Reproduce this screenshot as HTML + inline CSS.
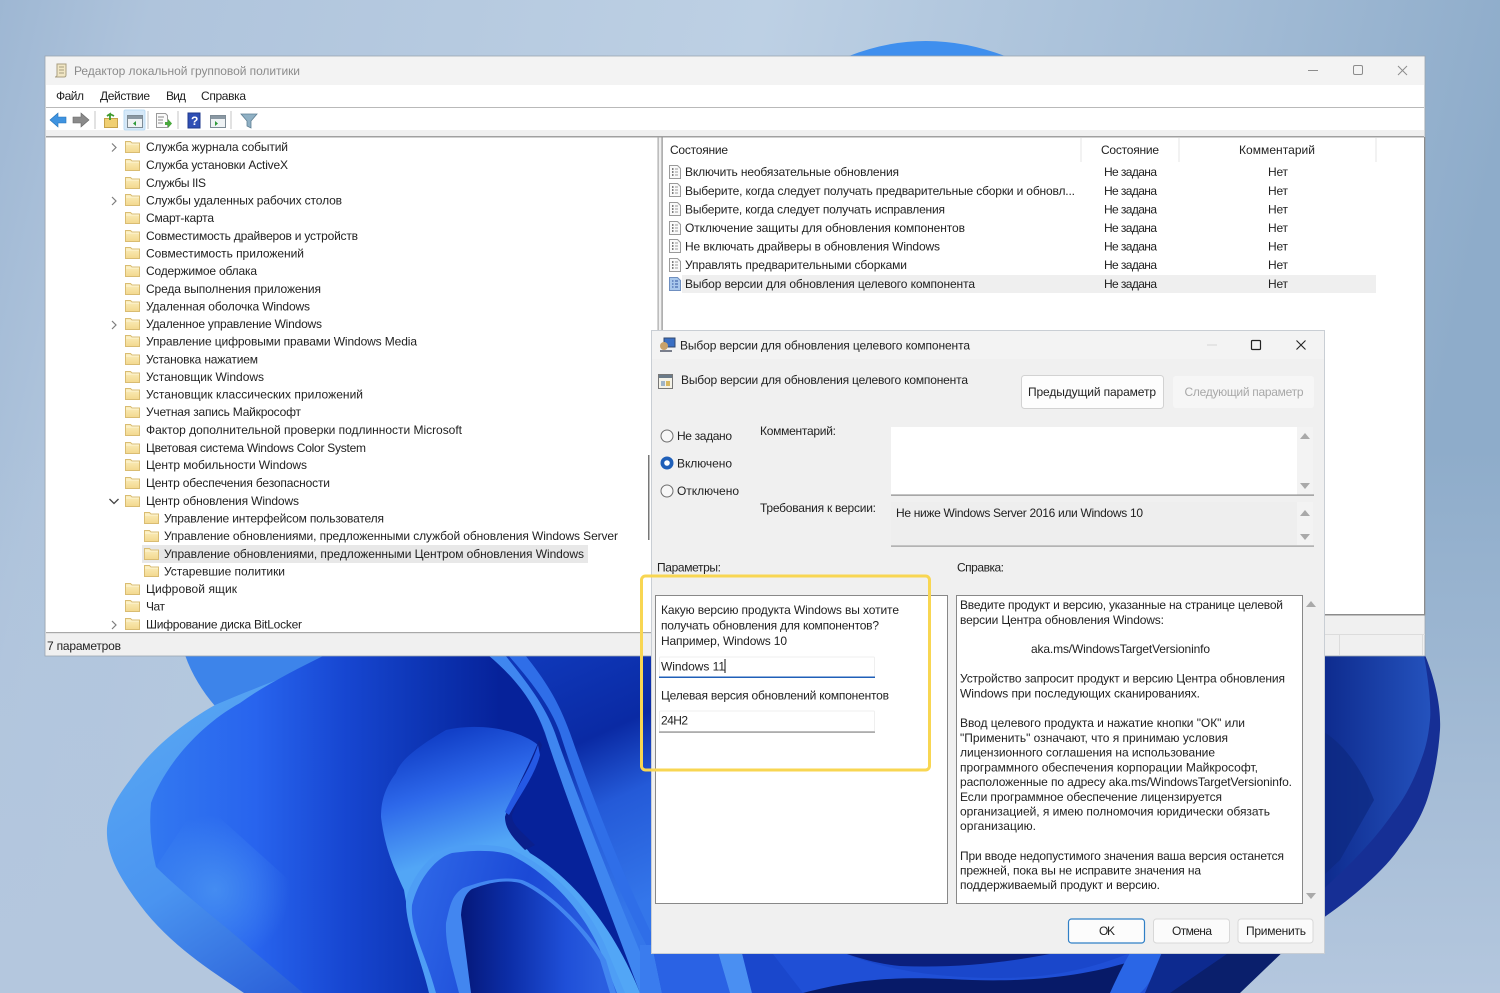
<!DOCTYPE html>
<html lang="ru"><head><meta charset="utf-8"><title>Редактор локальной групповой политики</title>
<style>
html,body{margin:0;padding:0;background:#b5c8df;overflow:hidden}
svg{display:block;position:absolute;left:0;top:0}
text{font-family:"Liberation Sans",sans-serif;font-size:12px;fill:#222;white-space:pre}
.g{fill:#8b8b8b}.d{fill:#a8a8a8}
</style></head><body>
<svg width="1500" height="993" viewBox="0 0 1500 993" xmlns="http://www.w3.org/2000/svg">
<defs>
<linearGradient id="bg" x1="0" y1="0" x2="1" y2="0.15"><stop offset="0" stop-color="#9eb7d3"/><stop offset=".1" stop-color="#afc4dc"/><stop offset=".5" stop-color="#bdd0e4"/><stop offset=".8" stop-color="#a3bcd6"/><stop offset="1" stop-color="#8eacca"/></linearGradient>
<linearGradient id="bg2" x1="0" y1="0" x2="0" y2="1"><stop offset=".45" stop-color="#b4c7de" stop-opacity="0"/><stop offset="1" stop-color="#b4c7de"/></linearGradient>
<linearGradient id="rim" x1="107" y1="700" x2="300" y2="993" gradientUnits="userSpaceOnUse"><stop offset="0" stop-color="#5aa9f4"/><stop offset=".55" stop-color="#4a94f0"/><stop offset="1" stop-color="#2a5fd8"/></linearGradient>
<linearGradient id="main" x1="150" y1="800" x2="500" y2="800" gradientUnits="userSpaceOnUse"><stop offset="0" stop-color="#3278f0"/><stop offset=".3" stop-color="#2864ee"/><stop offset=".55" stop-color="#1747d2"/><stop offset=".8" stop-color="#0c33b2"/><stop offset="1" stop-color="#06229a"/></linearGradient>
<radialGradient id="lo" cx="215" cy="890" r="75" gradientUnits="userSpaceOnUse"><stop offset="0" stop-color="#4a94f2" stop-opacity=".8"/><stop offset="1" stop-color="#4a94f2" stop-opacity="0"/></radialGradient>
<linearGradient id="fold" x1="440" y1="735" x2="475" y2="850" gradientUnits="userSpaceOnUse"><stop offset="0" stop-color="#1240c8"/><stop offset=".45" stop-color="#2d68ea"/><stop offset="1" stop-color="#52a6f6"/></linearGradient>
<linearGradient id="in1" x1="420" y1="900" x2="610" y2="950" gradientUnits="userSpaceOnUse"><stop offset="0" stop-color="#2c64e6"/><stop offset=".5" stop-color="#1b49d6"/><stop offset="1" stop-color="#2d62e2"/></linearGradient>
<linearGradient id="in2" x1="462" y1="940" x2="600" y2="940" gradientUnits="userSpaceOnUse"><stop offset="0" stop-color="#05187a"/><stop offset=".35" stop-color="#0c2ea8"/><stop offset=".75" stop-color="#1f4fd8"/><stop offset="1" stop-color="#2a5ee0"/></linearGradient>
<linearGradient id="rgt" x1="540" y1="660" x2="650" y2="900" gradientUnits="userSpaceOnUse"><stop offset="0" stop-color="#0f37b8"/><stop offset=".35" stop-color="#0a2aa4"/><stop offset=".6" stop-color="#245ad8"/><stop offset="1" stop-color="#3476ea"/></linearGradient>
<linearGradient id="rt" x1="1324" y1="750" x2="1430" y2="750" gradientUnits="userSpaceOnUse"><stop offset="0" stop-color="#0e2b8e"/><stop offset="1" stop-color="#2452bd"/></linearGradient>
<linearGradient id="fd" x1="0" y1="0" x2="0" y2="1"><stop offset="0" stop-color="#fbeebd"/><stop offset="1" stop-color="#f3d88e"/></linearGradient>
<g id="f"><path d="M.5 2.500h5l1.500 1.500h7.500v9.500h-14z" fill="url(#fd)" stroke="#d9bc72"/><path d="M1 5h13" stroke="#fdf6d8"/></g>
<g id="p"><path d="M.5.500h8l3 3v10h-11z" fill="#fafafa" stroke="#9a9a9a"/><path d="M3 4h1.500M3 7h1.500M3 10h1.500" stroke="#333" stroke-width="1.200"/><path d="M6 4h3M6 7h3M6 10h3" stroke="#999"/></g>
<path id="r" d="M0-4l4 4-4 4" fill="none" stroke="#7d7d7d" stroke-width="1.200"/>
<path id="up" d="M-5 3h10l-5-6z" fill="#a9a9a9"/>
<path id="dn" d="M-5-3h10l-5 6z" fill="#a9a9a9"/>
</defs>

<rect width="1500" height="993" fill="url(#bg)"/>
<rect width="1500" height="993" fill="url(#bg2)"/>

<!-- wallpaper -->
<path d="M849 56Q925 26 1005 56z" fill="#3f8fee"/>
<path d="M185 655C192 675 203 692 215 706L345 655z" fill="#3d84ea"/>
<!-- whole silhouette base -->
<path d="M341 655C290 675 250 690 215 705C180 725 150 750 130 780C115 800 106 815 107 835C108 860 125 885 140 905C170 945 210 970 244 993H660V655z" fill="url(#rim)"/>
<!-- main interior -->
<path d="M325 655C295 670 265 685 240 703C200 725 165 765 151 803Q148 835 156 867C190 900 225 925 252 950L303 993H660V655z" fill="url(#main)"/>
<path d="M156 867C190 900 225 925 252 950L290 985L300 890L200 800z" fill="url(#lo)"/>
<!-- right-hand panels -->
<path d="M488 655C520 680 535 705 545 735C565 790 610 890 657 993H680V655z" fill="url(#rgt)"/>
<path d="M488 655C518 680 535 705 545 733C560 780 590 860 640 993H657C610 880 575 790 555 733C545 705 525 680 505 655z" fill="#3f86f0"/>
<path d="M508 655C530 680 550 705 560 733C575 780 610 880 657 965V945C620 870 590 790 570 733C558 700 545 680 525 655z" fill="#2f6ee8"/>
<!-- fold -->
<path d="M446 730C420 745 400 760 396 773C383 790 381 805 381 817C385 850 395 870 404 890C410 930 425 965 433 993H640C615 930 575 880 530 853C520 840 508 830 505 817C512 795 530 770 538 745C520 730 480 722 446 730z" fill="url(#fold)"/>
<path d="M539 740C530 765 512 795 505 817C505 830 515 840 525 850L535 845C520 830 512 825 512 815C520 795 535 770 542 745z" fill="#0a1f8c"/>
<path d="M538 745C530 770 512 795 505 812L509 815C520 795 535 775 540 755z" fill="#2458e4"/>
<!-- first inner -->
<path d="M406 900C410 880 430 852 450 847C480 843 500 845 513 850C550 868 585 900 605 945L625 993H429C420 955 405 925 406 900z" fill="#4e9ef5"/>
<path d="M412 905C418 880 435 858 452 853C480 849 500 851 511 855C545 872 580 905 600 950L617 993H436C426 955 410 930 412 905z" fill="url(#in1)"/>
<!-- second inner -->
<path d="M446 923C450 905 452 895 463 888C490 878 508 877 522 880C545 888 585 925 606 960L616 993H459C452 965 445 945 446 923z" fill="#4286f0"/>
<path d="M471 993L461 915C462 900 466 893 472 889C492 881 508 880 520 883C543 892 580 925 600 960L610 993z" fill="url(#in2)"/>
<!-- bottom strip -->
<rect x="640" y="945" width="600" height="48" fill="#1f4fd6"/>
<path d="M640 945H652L662 993H640z" fill="#3a7cee"/><path d="M652 945H716L730 993H662z" fill="#2a62e4"/><path d="M716 945H740L752 993H730z" fill="#4a8ff2"/><path d="M740 945H766L803 993H752z" fill="#1a47cc"/>
<path d="M844 953C880 968 930 978 1000 978C1060 978 1100 965 1130 953z" fill="#1a47cb"/>
<path d="M844 953C865 960 880 964 900 966C950 968 1000 964 1055 953z" fill="#0b1f7c"/>
<path d="M803 993C860 978 900 977 950 979C1030 984 1090 975 1135 960L1110 993z" fill="#071a68"/>
<path d="M1135 945H1165C1160 965 1150 985 1140 993H1110C1118 975 1128 955 1135 945z" fill="#2a66e6"/>
<path d="M1165 945H1240L1180 993H1145z" fill="#0d2a8f"/>
<path d="M1240 945H1290L1240 993H1170z" fill="#0a1f6c"/>
<!-- right side -->
<path d="M1320 655H1425C1437 685 1441 710 1440 730C1438 760 1432 785 1427 800C1420 820 1410 835 1400 847C1385 870 1350 900 1320 920z" fill="#162f95"/>
<path d="M1320 655H1424C1430 690 1431 710 1430 720C1428 740 1425 750 1420 763C1412 785 1403 800 1393 813C1375 840 1345 870 1320 892z" fill="url(#rt)"/>
<path d="M1324 732C1345 745 1362 770 1374 800L1340 860L1324 875z" fill="#0e2a82" opacity=".75"/>

<!-- main window -->
<rect x="45" y="56" width="1380" height="600" fill="#f0f0f0" stroke="#9aa5b0" stroke-width=".8"/>
<rect x="45.500" y="56.500" width="1379" height="29" fill="#f3f3f3"/>
<rect x="46" y="85" width="1378" height="22" fill="#fff"/>
<rect x="46" y="107" width="1378" height="1" fill="#b9b9b9"/>
<rect x="46" y="108" width="1378" height="22" fill="#fff"/>
<rect x="46" y="130" width="1378" height="6" fill="#f0f0f0"/>
<rect x="46" y="136" width="1378" height="1.500" fill="#a0a0a0"/>
<rect x="46" y="137.500" width="612" height="495" fill="#fff"/>
<rect x="657.500" y="137" width="1.200" height="496" fill="#a8a8a8"/>
<rect x="46" y="632" width="612" height="1.200" fill="#a8a8a8"/>
<rect x="662" y="137.500" width="762" height="477" fill="#fff"/>
<rect x="661.500" y="137" width="1.200" height="478" fill="#8f8f8f"/>
<rect x="662" y="614" width="763" height="1.500" fill="#8c8c8c"/>
<rect x="1424" y="137" width="1.200" height="478" fill="#8c8c8c"/>
<rect x="660" y="634" width="765" height="1" fill="#dcdcdc"/>
<rect x="1339" y="635" width="1" height="20" fill="#dcdcdc"/>
<rect x="1422" y="635" width="1" height="20" fill="#dcdcdc"/>
<rect x="648" y="455" width="1.500" height="85" fill="#777"/>

<!-- title -->
<g transform="translate(54 63)"><path d="M3 1h9v11q0 2-2 2H1q2 0 2-2z" fill="#f1e6c4" stroke="#a89e80"/><path d="M5 4h5M5 7h5M5 10h5" stroke="#a89e80"/></g>
<text class="g" x="74" y="75" textLength="226">Редактор локальной групповой политики</text>
<path d="M1308 70.500h10" stroke="#8c8c8c"/><rect x="1353.500" y="65.500" width="9" height="9" rx="1.500" fill="none" stroke="#8c8c8c"/><path d="M1398 66l9 9M1407 66l-9 9" stroke="#8c8c8c"/>
<text x="56" y="100" textLength="28">Файл</text><text x="100" y="100" textLength="50">Действие</text><text x="166" y="100" textLength="20">Вид</text><text x="201" y="100" textLength="45">Справка</text>

<!-- toolbar -->
<rect x="124" y="110" width="21" height="20" rx="1.500" fill="#d5e8f8" stroke="#bcdcf4"/>
<path d="M50 120l8-7v4h8v6h-8v4z" fill="#3f93e0" stroke="#2272b8" stroke-width=".6"/>
<path d="M89 120l-8-7v4h-8v6h8v4z" fill="#8a8a8a" stroke="#666" stroke-width=".6"/>
<path d="M95 111v18M148 111v18M178 111v18M231 111v18" stroke="#c4c4c4" stroke-width="1"/>
<path d="M104.500 118.500h13v9h-13z" fill="#f0cf72" stroke="#c6a24a"/><path d="M110 120l0-6-3 2M110 114l4 2" stroke="#3e9a2c" stroke-width="1.800" fill="none"/>
<rect x="127.500" y="115.500" width="15" height="12" fill="#eef2f4" stroke="#7d8b95"/><rect x="128" y="116" width="14" height="3" fill="#8a98a3"/><path d="M136 121v5l-3-2.500z" fill="#2f9a3a"/>
<path d="M156.500 113.500h9l2 2v12h-11z" fill="#fafafa" stroke="#9a9a9a"/><path d="M158 117h6M158 120h5M158 123h5" stroke="#888"/><path d="M165 122h3v-3l4 4.500-4 4.500v-3h-3z" fill="#49a83c"/>
<rect x="188" y="113" width="12" height="15" fill="#2f4fb5" stroke="#1f3a8c"/><text x="191" y="125" style="font-size:12px;font-weight:bold;fill:#fff">?</text>
<rect x="210.500" y="115.500" width="15" height="12" fill="#eef2f4" stroke="#7d8b95"/><rect x="211" y="116" width="14" height="3" fill="#8a98a3"/><path d="M215 121v5l3-2.500z" fill="#2f9a3a"/>
<path d="M241 114h16l-6 7v7l-4-2v-5z" fill="#8fb0c4" stroke="#5f7f93" stroke-width=".8"/>

<!-- tree -->
<rect x="142" y="545" width="446" height="18" fill="#e8e8e8"/>
<use href="#r" x="112" y="147.500"/><use href="#r" x="112" y="201"/><use href="#r" x="112" y="325"/><use href="#r" x="112" y="625"/>
<path d="M109.500 499l4.500 4.500 4.500-4.500" fill="none" stroke="#444" stroke-width="1.300"/>
<use href="#f" x="125" y="139"/><use href="#f" x="125" y="157"/><use href="#f" x="125" y="175"/><use href="#f" x="125" y="192"/><use href="#f" x="125" y="210"/><use href="#f" x="125" y="228"/><use href="#f" x="125" y="245"/><use href="#f" x="125" y="263"/><use href="#f" x="125" y="281"/><use href="#f" x="125" y="298"/><use href="#f" x="125" y="316"/><use href="#f" x="125" y="333"/><use href="#f" x="125" y="351"/><use href="#f" x="125" y="369"/><use href="#f" x="125" y="386"/><use href="#f" x="125" y="404"/><use href="#f" x="125" y="422"/><use href="#f" x="125" y="440"/><use href="#f" x="125" y="457"/><use href="#f" x="125" y="475"/><use href="#f" x="125" y="493"/><use href="#f" x="144" y="510"/><use href="#f" x="144" y="528"/><use href="#f" x="144" y="546"/><use href="#f" x="144" y="563"/><use href="#f" x="125" y="581"/><use href="#f" x="125" y="598"/><use href="#f" x="125" y="616"/>
<text x="146" y="151" textLength="142">Служба журнала событий</text>
<text x="146" y="169" textLength="142">Служба установки ActiveX</text>
<text x="146" y="187" textLength="60">Службы IIS</text>
<text x="146" y="204.500" textLength="196">Службы удаленных рабочих столов</text>
<text x="146" y="222" textLength="68">Смарт-карта</text>
<text x="146" y="240" textLength="212">Совместимость драйверов и устройств</text>
<text x="146" y="257.500" textLength="158">Совместимость приложений</text>
<text x="146" y="275" textLength="111">Содержимое облака</text>
<text x="146" y="293" textLength="175">Среда выполнения приложения</text>
<text x="146" y="310.500" textLength="164">Удаленная оболочка Windows</text>
<text x="146" y="328" textLength="176">Удаленное управление Windows</text>
<text x="146" y="345.500" textLength="271">Управление цифровыми правами Windows Media</text>
<text x="146" y="363.500" textLength="112">Установка нажатием</text>
<text x="146" y="381" textLength="118">Установщик Windows</text>
<text x="146" y="398.500" textLength="217">Установщик классических приложений</text>
<text x="146" y="416" textLength="155">Учетная запись Майкрософт</text>
<text x="146" y="434" textLength="316">Фактор дополнительной проверки подлинности Microsoft</text>
<text x="146" y="452" textLength="220">Цветовая система Windows Color System</text>
<text x="146" y="469" textLength="161">Центр мобильности Windows</text>
<text x="146" y="487" textLength="184">Центр обеспечения безопасности</text>
<text x="146" y="505" textLength="153">Центр обновления Windows</text>
<text x="164" y="522.500" textLength="220">Управление интерфейсом пользователя</text>
<text x="164" y="540" textLength="454">Управление обновлениями, предложенными службой обновления Windows Server</text>
<text x="164" y="558" textLength="420">Управление обновлениями, предложенными Центром обновления Windows</text>
<text x="164" y="575.500" textLength="121">Устаревшие политики</text>
<text x="146" y="593" textLength="91">Цифровой ящик</text>
<text x="146" y="610.500" textLength="19">Чат</text>
<text x="146" y="628.500" textLength="156">Шифрование диска BitLocker</text>
<text x="47" y="650" textLength="74">7 параметров</text>

<!-- list -->
<path d="M1081 138v24M1179 138v24M1376 138v24" stroke="#e4e4e4"/>
<text x="670" y="154" textLength="58">Состояние</text><text x="1101" y="154" textLength="58">Состояние</text><text x="1239" y="154" textLength="76">Комментарий</text>
<rect x="682" y="275" width="694" height="18" fill="#efefef"/>
<use href="#p" x="669" y="165"/><use href="#p" x="669" y="183"/><use href="#p" x="669" y="202"/><use href="#p" x="669" y="221"/><use href="#p" x="669" y="239"/><use href="#p" x="669" y="258"/>
<g transform="translate(669 277)"><path d="M.5.500h8l3 3v10h-11z" fill="#a9c8ec" stroke="#6f8fc0"/><path d="M3 4h1.500M3 7h1.500M3 10h1.500M6 4h3M6 7h3M6 10h3" stroke="#2f55a0"/></g>
<text x="685" y="176" textLength="214">Включить необязательные обновления</text>
<text x="685" y="195" textLength="390">Выберите, когда следует получать предварительные сборки и обновл...</text>
<text x="685" y="213.500" textLength="260">Выберите, когда следует получать исправления</text>
<text x="685" y="232" textLength="280">Отключение защиты для обновления компонентов</text>
<text x="685" y="250.500" textLength="255">Не включать драйверы в обновления Windows</text>
<text x="685" y="269" textLength="222">Управлять предварительными сборками</text>
<text x="685" y="288" textLength="290">Выбор версии для обновления целевого компонента</text>
<text x="1104" y="176" textLength="53">Не задана</text><text x="1104" y="195" textLength="53">Не задана</text><text x="1104" y="213.500" textLength="53">Не задана</text><text x="1104" y="232" textLength="53">Не задана</text><text x="1104" y="250.500" textLength="53">Не задана</text><text x="1104" y="269" textLength="53">Не задана</text><text x="1104" y="288" textLength="53">Не задана</text>
<text x="1268" y="176" textLength="20">Нет</text><text x="1268" y="195" textLength="20">Нет</text><text x="1268" y="213.500" textLength="20">Нет</text><text x="1268" y="232" textLength="20">Нет</text><text x="1268" y="250.500" textLength="20">Нет</text><text x="1268" y="269" textLength="20">Нет</text><text x="1268" y="288" textLength="20">Нет</text>

<!-- dialog -->
<rect x="651.500" y="330.500" width="673" height="623" fill="#f0f0f0" stroke="#c9ced4"/>
<rect x="652" y="331" width="672" height="28" fill="#f3f3f3"/>
<g transform="translate(660 338)"><rect x="4" y="0" width="11" height="9" fill="#3a6fc4" stroke="#33486e"/><circle cx="4" cy="8" r="4" fill="#c9a26a"/><path d="M0 12h12v2H0z" fill="#7a7f8c"/></g>
<text x="680" y="349.500" textLength="290">Выбор версии для обновления целевого компонента</text>
<path d="M1207 345h10" stroke="#d4d4d4"/><rect x="1251.500" y="340.500" width="9" height="9" rx="1" fill="none" stroke="#222" stroke-width="1.200"/><path d="M1296.500 340.500l9 9M1305.500 340.500l-9 9" stroke="#222" stroke-width="1.100"/>
<g transform="translate(658 374)"><rect x=".5" y=".5" width="14" height="14" fill="#f4f2e8" stroke="#777"/><rect x="1" y="1" width="13" height="3" fill="#6a7a88"/><rect x="3" y="7" width="4" height="5" fill="#9fb4c8"/><rect x="8" y="7" width="4" height="5" fill="#d8b860"/></g>
<text x="681" y="384" textLength="287">Выбор версии для обновления целевого компонента</text>
<rect x="1021.500" y="375.500" width="142" height="33" rx="3" fill="#fdfdfd" stroke="#d2d2d2"/>
<text x="1028" y="396" textLength="128">Предыдущий параметр</text>
<rect x="1173" y="376" width="141" height="32" rx="3" fill="#f6f6f6"/>
<text class="d" x="1184.500" y="396" textLength="119">Следующий параметр</text>

<circle cx="667" cy="436" r="6" fill="#f7f7f7" stroke="#6e6e6e"/>
<circle cx="667" cy="463" r="6.500" fill="#1f5fb8"/><circle cx="667" cy="463" r="2.800" fill="#fff"/>
<circle cx="667" cy="491" r="6" fill="#f7f7f7" stroke="#6e6e6e"/>
<text x="677" y="440" textLength="55">Не задано</text><text x="677" y="467.500" textLength="55">Включено</text><text x="677" y="495" textLength="62">Отключено</text>
<text x="760" y="435" textLength="76">Комментарий:</text><text x="760" y="512" textLength="116">Требования к версии:</text>

<rect x="891" y="427" width="406" height="68" fill="#fff"/><rect x="1297" y="427" width="16" height="68" fill="#f3f3f3"/>
<rect x="891" y="494.500" width="423" height="1.200" fill="#888"/>
<use href="#up" x="1305" y="436"/><use href="#dn" x="1305" y="486"/>
<rect x="891" y="502" width="406" height="43" fill="#eeeeee"/><rect x="1297" y="502" width="16" height="43" fill="#f3f3f3"/>
<rect x="891" y="545.500" width="423" height="1.200" fill="#999"/>
<use href="#up" x="1305" y="513"/><use href="#dn" x="1305" y="537"/>
<text x="896" y="517" textLength="247">Не ниже Windows Server 2016 или Windows 10</text>
<text x="657" y="571.500" textLength="64">Параметры:</text><text x="957" y="571.500" textLength="47">Справка:</text>

<rect x="655.500" y="595.500" width="292" height="308" fill="#fff" stroke="#888"/>
<rect x="956.500" y="595.500" width="346" height="308" fill="#fff" stroke="#888"/>
<use href="#up" x="1311" y="604"/><use href="#dn" x="1311" y="896"/>
<text x="661" y="614" textLength="238">Какую версию продукта Windows вы хотите</text>
<text x="661" y="629.500" textLength="218">получать обновления для компонентов?</text>
<text x="661" y="645" textLength="126">Например, Windows 10</text>
<rect x="659.500" y="657" width="215" height="20" rx="1" fill="#fff" stroke="#efefef"/><rect x="659" y="676.500" width="216" height="1.500" fill="#1f5fb8"/>
<text x="661" y="670.500" textLength="64">Windows 11</text><rect x="724.500" y="659" width="1" height="14" fill="#111"/>
<text x="661" y="699.500" textLength="228">Целевая версия обновлений компонентов</text>
<rect x="659.500" y="711" width="215" height="20.500" rx="1" fill="#fff" stroke="#efefef"/><rect x="659" y="731.500" width="216" height="1.200" fill="#8a8a8a"/>
<text x="661" y="724.500" textLength="27">24H2</text>

<text x="960" y="609" textLength="323">Введите продукт и версию, указанные на странице целевой</text>
<text x="960" y="624" textLength="204">версии Центра обновления Windows:</text>
<text x="1031" y="653" textLength="179">aka.ms/WindowsTargetVersioninfo</text>
<text x="960" y="682.500" textLength="325">Устройство запросит продукт и версию Центра обновления</text>
<text x="960" y="697.500" textLength="240">Windows при последующих сканированиях.</text>
<text x="960" y="727" textLength="285">Ввод целевого продукта и нажатие кнопки "ОК" или</text>
<text x="960" y="742" textLength="268">"Применить" означают, что я принимаю условия</text>
<text x="960" y="756.500" textLength="255">лицензионного соглашения на использование</text>
<text x="960" y="771.500" textLength="298">программного обеспечения корпорации Майкрософт,</text>
<text x="960" y="786" textLength="332">расположенные по адресу aka.ms/WindowsTargetVersioninfo.</text>
<text x="960" y="801" textLength="262">Если программное обеспечение лицензируется</text>
<text x="960" y="815.500" textLength="310">организацией, я имею полномочия юридически обязать</text>
<text x="960" y="830" textLength="76">организацию.</text>
<text x="960" y="860" textLength="324">При вводе недопустимого значения ваша версия останется</text>
<text x="960" y="874.500" textLength="241">прежней, пока вы не исправите значения на</text>
<text x="960" y="889" textLength="200">поддерживаемый продукт и версию.</text>

<rect x="1068.500" y="919" width="76" height="24" rx="3" fill="#fcfcfc" stroke="#2f7fc6" stroke-width="1.200"/>
<text x="1099" y="935" textLength="16">OK</text>
<rect x="1153.500" y="919" width="76" height="24" rx="3" fill="#fbfbfb" stroke="#d8d8d8"/>
<text x="1172" y="935" textLength="40">Отмена</text>
<rect x="1238" y="919" width="75" height="24" rx="3" fill="#fbfbfb" stroke="#d8d8d8"/>
<text x="1246" y="935" textLength="60">Применить</text>

<rect x="641.500" y="576" width="288" height="194" rx="4" fill="none" stroke="#f8d652" stroke-width="3"/>
</svg>
</body></html>
